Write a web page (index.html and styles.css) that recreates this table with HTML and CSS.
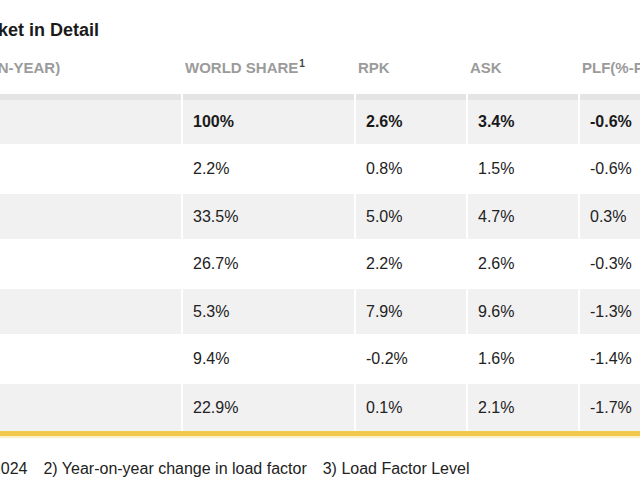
FILE: index.html
```html
<!DOCTYPE html>
<html lang="en">
<head>
<meta charset="utf-8">
<title>Air Passenger Market in Detail</title>
<link rel="stylesheet" href="styles.css">
</head>
<body>
<div class="page">
  <h1 class="title">Air Passenger Market in Detail</h1>
  <table class="market">
    <colgroup>
      <col class="c-region">
      <col class="c-share">
      <col class="c-num">
      <col class="c-num">
      <col class="c-num">
      <col class="c-num">
    </colgroup>
    <thead>
      <tr>
        <th class="th-region">REGION (YEAR-ON-YEAR)</th>
        <th>WORLD SHARE<sup>1</sup></th>
        <th>RPK</th>
        <th>ASK</th>
        <th>PLF(%-PT)<sup>2</sup></th>
        <th>PLF(LEVEL)<sup>3</sup></th>
      </tr>
    </thead>
    <tbody>
      <tr class="total">
        <td>Total Market</td><td>100%</td><td>2.6%</td><td>3.4%</td><td>-0.6%</td><td>82.3%</td>
      </tr>
      <tr class="white">
        <td>Africa</td><td>2.2%</td><td>0.8%</td><td>1.5%</td><td>-0.6%</td><td>73.8%</td>
      </tr>
      <tr class="grey">
        <td>Asia Pacific</td><td>33.5%</td><td>5.0%</td><td>4.7%</td><td>0.3%</td><td>83.5%</td>
      </tr>
      <tr class="white">
        <td>Europe</td><td>26.7%</td><td>2.2%</td><td>2.6%</td><td>-0.3%</td><td>83.7%</td>
      </tr>
      <tr class="grey">
        <td>Latin America</td><td>5.3%</td><td>7.9%</td><td>9.6%</td><td>-1.3%</td><td>82.4%</td>
      </tr>
      <tr class="white">
        <td>Middle East</td><td>9.4%</td><td>-0.2%</td><td>1.6%</td><td>-1.4%</td><td>78.8%</td>
      </tr>
      <tr class="grey last">
        <td>North America</td><td>22.9%</td><td>0.1%</td><td>2.1%</td><td>-1.7%</td><td>81.6%</td>
      </tr>
    </tbody>
  </table>
  <div class="rule"></div>
  <p class="notes">
    <span>1) % of industry RPKs in 2024</span>
    <span>2) Year-on-year change in load factor</span>
    <span>3) Load Factor Level</span>
  </p>
</div>
</body>
</html>
```

FILE: styles.css
```css
html, body {
  margin: 0;
  padding: 0;
  background: #ffffff;
  overflow: hidden;
}

body {
  font-family: "Liberation Sans", Arial, sans-serif;
  color: #222222;
}

.page {
  margin-left: -160px;
  width: 1000px;
}

.title {
  margin: 0;
  padding-top: 19px;
  font-size: 18px;
  line-height: 22px;
  font-weight: 700;
  color: #1a1a1a;
}

.market {
  border-collapse: separate;
  border-spacing: 2px 0;
  table-layout: fixed;
  width: 854px;
  margin-left: -2px;
}

.c-region { width: 341px; }
.c-share { width: 171px; }
.c-num { width: 110px; }

.market th {
  text-align: left;
  font-size: 15px;
  line-height: 18px;
  font-weight: 700;
  color: #9b9b9b;
  padding: 18px 0 17px 2px;
  white-space: nowrap;
  overflow: hidden;
}

.market th.th-region {
  padding-left: 31px;
}

.market th sup {
  font-size: 10px;
  line-height: 0;
  vertical-align: 6px;
  color: #444444;
  margin-left: 1px;
}

.market td {
  font-size: 16px;
  padding: 0 10px;
  white-space: nowrap;
  color: #222222;
}

.market tr.total td {
  background: #f1f1f1;
  border-top: 6px solid #e4e4e4;
  height: 44px;
  font-weight: 700;
  color: #1a1a1a;
}

.market tr.white td {
  background: #ffffff;
  height: 50px;
}

.market tr.grey td {
  background: #f1f1f1;
  height: 45px;
}

.market tr.grey.last td {
  height: 47px;
}

.rule {
  height: 5px;
  background: #f1c84b;
  border-bottom: 2px solid #fcf1c6;
}

.notes {
  display: flex;
  gap: 16px;
  margin: 22px 0 0 -26px;
  font-size: 16px;
  line-height: 18px;
  color: #222222;
}
```
